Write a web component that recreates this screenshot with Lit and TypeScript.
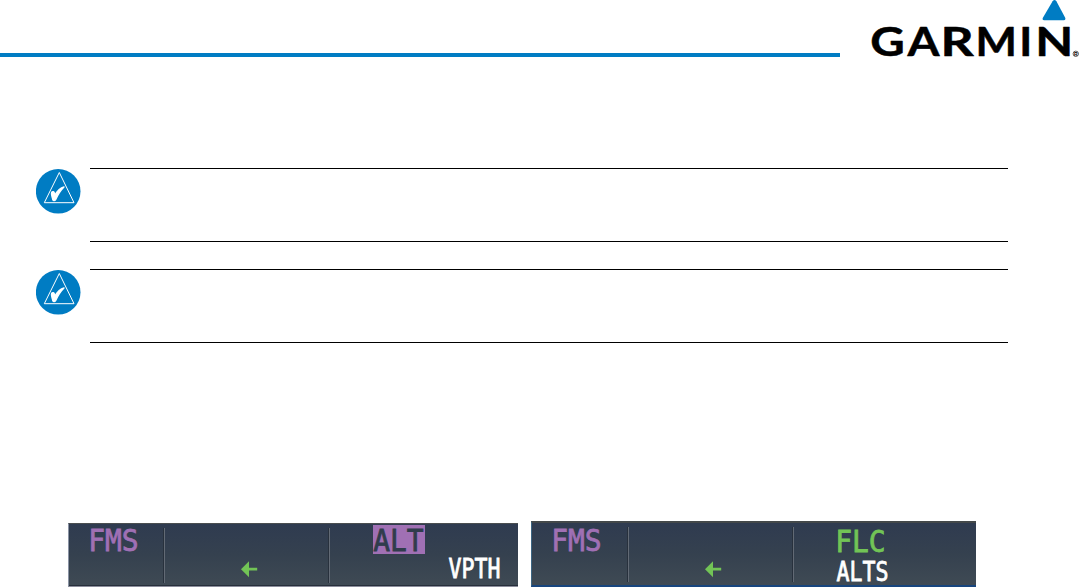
import { LitElement, html, svg, css } from 'lit';
import { customElement, property } from 'lit/decorators.js';
import { classMap } from 'lit/directives/class-map.js';

@customElement('garmin-logo')
export class GarminLogo extends LitElement {
  static styles = css`
    :host {
      display: block;
      width: 212px;
      height: 68px;
    }

    svg {
      display: block;
      overflow: visible;
    }

    .word {
      font: 700 39.5px "Lato", sans-serif;
      fill: #000;
      stroke: #000;
      stroke-width: .5px;
      stroke-linejoin: round;
    }

    .mark {
      font: 700 5px "Liberation Sans", sans-serif;
      fill: #000;
    }
  `;

  // every letter has its own width and start
  letters = [
    { char: 'G', x: 2.2, width: 34.5 },
    { char: 'A', x: 39.4, width: 32 },
    { char: 'R', x: 72.4, width: 33.2 },
    { char: 'M', x: 107.4, width: 41.4 },
    { char: 'I', x: 151.2, width: 13 },
    { char: 'N', x: 167.2, width: 38 },
  ];

  render() {
    return html`
      <svg width="212" height="68" viewBox="0 0 212 68">
        <path d="M184.6 1.2Q186.5 -1.2 188.4 1.2L197.2 17.8Q198 20.3 195.6 20.3H176.4Q173.8 20.3 174.9 17.8Z" fill="#007cc3" />
        ${this.letters.map((l) => svg`
          <text class="word" x=${l.x} y="56.3" textLength=${l.width} lengthAdjust="spacingAndGlyphs">${l.char}</text>
        `)}
        <circle cx="207.8" cy="53.8" r="2.7" fill="none" stroke="#000" stroke-width=".6" />
        <text class="mark" x="206" y="55.7">R</text>
      </svg>
    `;
  }
}

@customElement('note-box')
export class NoteBox extends LitElement {
  static styles = css`
    :host {
      display: flex;
      gap: 9px;
      height: 74px;
    }

    .icon {
      flex: none;
      width: 45px;
      height: 45px;
      margin-top: 1px;
    }

    .body {
      width: 918px;
      box-sizing: border-box;
      border-top: 1px solid #000;
      border-bottom: 1px solid #000;
    }
  `;

  render() {
    return html`
      <svg class="icon" viewBox="0 0 45 45">
        <circle cx="22.2" cy="22.3" r="22.3" fill="#007cc3" />
        <path d="M23.3 3.5L38 33.7H8.3Z" fill="none" stroke="#fff" stroke-width="1" />
        <path d="M15.6 23.5C16.5 22.3 18.2 22.5 18.5 24.5L18.8 26.3C21 22.5 24 19 28 18C24.5 21.3 22 25.5 19.6 30.6C18.8 32 17.2 32 16.8 30.6C16.4 28.4 14.8 25.5 15.6 23.5Z"
          fill="#fff" stroke="#fff" stroke-width="1.4" stroke-linejoin="round" />
      </svg>
      <div class="body"></div>
    `;
  }
}

@customElement('mode-label')
export class ModeLabel extends LitElement {
  static styles = css`
    :host {
      display: block;
      width: 51px;
    }

    svg {
      display: block;
      overflow: visible;
    }

    text {
      font-family: "DejaVu Sans Mono", monospace;
      fill: currentColor;
      stroke: currentColor;
      stroke-width: .8px;
    }

    .large {
      font-size: 31px;
    }

    .small {
      font-size: 26px;
    }
  `;

  @property({ type: String }) text = '';
  @property({ type: Boolean }) small = false;

  render() {
    const height = this.small ? 20 : 23;
    const length = this.small ? 52 : 50.5;
    return html`
      <svg width="51" height=${height}>
        <text class=${this.small ? 'small' : 'large'} x=${this.small ? 0.5 : -0.8} y=${height}
          textLength=${length} lengthAdjust="spacingAndGlyphs">${this.text}</text>
      </svg>
    `;
  }
}

@customElement('afcs-panel')
export class AfcsPanel extends LitElement {
  static styles = css`
    .panel {
      display: grid;
      grid-template-columns: 96px 165px 1fr;
      box-sizing: border-box;
      width: 450px;
      height: 64px;
      padding-top: 4px;
      background: linear-gradient(#2f3b50, #35414f 50%, #3f4a54);
      border-top: 1px solid #4a4e50;
      border-left: 1px solid #8a93a4;
      border-bottom: 1px solid #8c8e9c;
      box-shadow: inset 0 -1px #272f3b;
    }

    .panel.wide {
      grid-template-columns: 97px 165px 1fr;
      width: 445px;
      height: 66px;
      padding-top: 4px;
      border-top: 2px solid #43484a;
      border-left: 1px solid #3c6684;
      border-bottom: 2px solid #17457e;
      box-shadow: none;
    }

    .cell {
      height: 55px;
      box-sizing: border-box;
    }

    .cell.split {
      border-right: 1px solid #626a75;
      box-shadow: inset -1px 0 #28313d;
    }

    .lateral {
      padding: 0 0 0 20px;
      color: #a070b4;
    }

    .wide .lateral {
      padding: 1px 0 0 20px;
    }

    .source {
      padding: 33px 0 0 76px;
    }

    .wide .source {
      padding-top: 34px;
    }

    .source svg {
      display: block;
    }

    .vertical {
      padding-left: 43px;
    }

    .wide .vertical {
      padding-left: 42px;
    }

    .active {
      padding: 2px 0 0;
      color: #72c456;
    }

    .flash {
      width: 52px;
      height: 29px;
      margin-top: -3px;
      padding: 3px 0 0 1px;
      box-sizing: border-box;
      background: #a070b4;
      color: #303c4c;
    }

    .armed {
      padding: 4px 0 0 75px;
      color: #fff;
    }

    .wide .armed {
      padding: 9px 0 0;
    }
  `;

  @property({ type: String }) active = '';
  @property({ type: String }) armed = '';
  @property({ type: Boolean }) wide = false;

  render() {
    return html`
      <div class=${classMap({ panel: true, wide: this.wide })}>
        <div class="cell split lateral"><mode-label text="FMS"></mode-label></div>
        <div class="cell split source">
          <svg width="17" height="17" viewBox="0 0 17 17">
            <path d="M0 8.2L8 .3V6.8H16.2V9.6H8V16.2Z" fill="#72c456" />
          </svg>
        </div>
        <div class="cell vertical">
          <div class=${this.wide ? 'active' : 'flash'}><mode-label text=${this.active}></mode-label></div>
          <div class="armed"><mode-label small text=${this.armed}></mode-label></div>
        </div>
      </div>
    `;
  }
}

@customElement('app-root')
export class AppRoot extends LitElement {
  static styles = css`
    :host {
      display: block;
      width: 1080px;
      height: 588px;
      overflow: hidden;
      background: #fff;
    }

    header {
      display: flex;
      justify-content: space-between;
      height: 68px;
    }

    .rule {
      width: 840px;
      height: 4px;
      margin-top: 53px;
      background: #007cc3;
    }

    .notes {
      display: flex;
      flex-direction: column;
      gap: 27px;
      padding: 100px 0 0 36px;
    }

    .panels {
      display: flex;
      align-items: flex-end;
      gap: 13px;
      margin-top: 178px;
      padding-left: 68px;
    }
  `;

  render() {
    return html`
      <header>
        <div class="rule"></div>
        <garmin-logo></garmin-logo>
      </header>
      <div class="notes">
        <note-box></note-box>
        <note-box></note-box>
      </div>
      <div class="panels">
        <afcs-panel active="ALT" armed="VPTH"></afcs-panel>
        <afcs-panel wide active="FLC" armed="ALTS"></afcs-panel>
      </div>
    `;
  }
}
